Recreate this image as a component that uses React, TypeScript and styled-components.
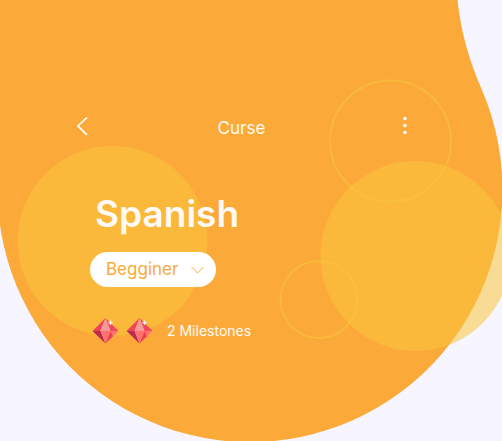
import React from "react";
import styled, { createGlobalStyle } from "styled-components";

const GlobalStyle = createGlobalStyle`
  *, *::before, *::after { box-sizing: border-box; }
  body {
    margin: 0;
    background: #f7f5ff;
    font-family: Inter, "Liberation Sans", sans-serif;
    overflow-x: hidden;
  }
`;

const Hero = styled.main`
  position: relative;
  min-height: 100vh;
  padding: 112px 95px 88px 76px;
  color: #fffaf5;
`;

const Backdrop = styled.svg`
  position: absolute;
  top: 0;
  left: 0;
  width: 100%;
  z-index: -1;
`;

const TopBar = styled.header`
  display: flex;
  align-items: center;
  justify-content: space-between;
`;

const IconButton = styled.button<{ $align: "start" | "end" }>`
  display: flex;
  justify-content: ${(p) => (p.$align === "start" ? "flex-start" : "flex-end")};
  width: 24px;
  height: 24px;
  padding: 0;
  border: 0;
  background: none;
  color: #fff;
  cursor: pointer;
`;

const PageTitle = styled.p`
  margin: 4px 0 0;
  font-size: 17px;
  font-weight: 400;
  line-height: 24px;
`;

const Course = styled.section`
  display: flex;
  flex-direction: column;
  align-items: flex-start;
  padding: 46px 0 0 14px;
`;

const CourseName = styled.h1`
  margin: 0 0 0 5px;
  font-size: 37px;
  font-weight: 600;
  line-height: 56px;
`;

const LevelField = styled.div`
  display: grid;
  align-items: center;
  margin-top: 10px;
  border-radius: 18px;
  background: #fff;

  > * { grid-area: 1 / 1; }
  > svg { justify-self: end; margin-right: 12px; pointer-events: none; }
`;

const LevelSelect = styled.select`
  appearance: none;
  width: 126px;
  height: 35px;
  padding: 0 32px 2px 16px;
  border: 0;
  border-radius: 18px;
  background: transparent;
  color: #fbaa3a;
  font: 400 17px/24px Inter, "Liberation Sans", sans-serif;
  cursor: pointer;
`;

const Milestones = styled.div`
  display: flex;
  align-items: center;
  gap: 6px;
  margin-top: 30px;
  padding-left: 1px;
`;

const MilestoneCount = styled.span`
  margin-left: 8px;
  font-size: 14px;
  font-weight: 400;
  line-height: 20px;
`;

const Gem = () => (
  <svg width="28" height="28" viewBox="0 0 28 28" aria-hidden="true">
    <path d="M14.500 1 1.500 14h8z" fill="#ee4459" />
    <path d="M14.500 1 27.500 14h-8z" fill="#f4475b" />
    <path d="M14.500 1 9.500 14h10z" fill="#f09b98" />
    <path d="M1.500 14l13 12.500L9.500 14z" fill="#b92b50" />
    <path d="M19.500 14h8l-5.500 5.300z" fill="#ff7070" />
    <path d="M22 19.300 14.500 26.500l5-12.500z" fill="#ef3d54" />
    <path d="M9.500 14h10l-5 12.500z" fill="#ff7070" />
    <path d="M19.500 3.500l.6 1.700 1.700.6-1.700.6-.6 1.700-.6-1.700-1.700-.6 1.700-.6z" fill="#fff" stroke="#fff" strokeWidth=".4" />
  </svg>
);

export default function App() {
  return (
    <>
      <GlobalStyle />
      <Hero>
        <Backdrop viewBox="0 0 502 441" aria-hidden="true">
          <path d="M0 0H457.500C461 34 470 62 482 90A252.500 252.500 0 1 1 -2.500 189.500Z" fill="#fbaa3a" />
          <g stroke="#fac43c" strokeOpacity=".55" strokeWidth="2" fill="none">
            <circle cx="390.500" cy="141" r="60.500" />
            <circle cx="319" cy="299.500" r="38.500" />
          </g>
          <g fill="#fac43c" fillOpacity=".55">
            <circle cx="112.500" cy="241" r="95" />
            <circle cx="415.500" cy="256" r="95" />
          </g>
        </Backdrop>

        <TopBar>
          <IconButton type="button" aria-label="Back" $align="start">
            <svg width="14" height="24" viewBox="0 0 14 24" fill="none" stroke="currentColor" strokeWidth="1.700">
              <path d="M11 3.500 2 12l9 8.800" />
            </svg>
          </IconButton>
          <PageTitle>Curse</PageTitle>
          <IconButton type="button" aria-label="More options" $align="end">
            <svg width="24" height="24" viewBox="0 0 24 24" fill="currentColor">
              <circle cx="22" cy="4.500" r="1.800" />
              <circle cx="22" cy="11.500" r="1.800" />
              <circle cx="22" cy="18.500" r="1.800" />
            </svg>
          </IconButton>
        </TopBar>

        <Course>
          <CourseName>Spanish</CourseName>
          <LevelField>
            <LevelSelect aria-label="Level" defaultValue="Begginer">
              <option>Begginer</option>
            </LevelSelect>
            <svg width="14" height="10" viewBox="0 0 14 10" fill="none" stroke="#fbaa3a" aria-hidden="true">
              <path d="M1.500 2 7.500 8l6-6" />
            </svg>
          </LevelField>
          <Milestones>
            <Gem />
            <Gem />
            <MilestoneCount>2 Milestones</MilestoneCount>
          </Milestones>
        </Course>
      </Hero>
    </>
  );
}
